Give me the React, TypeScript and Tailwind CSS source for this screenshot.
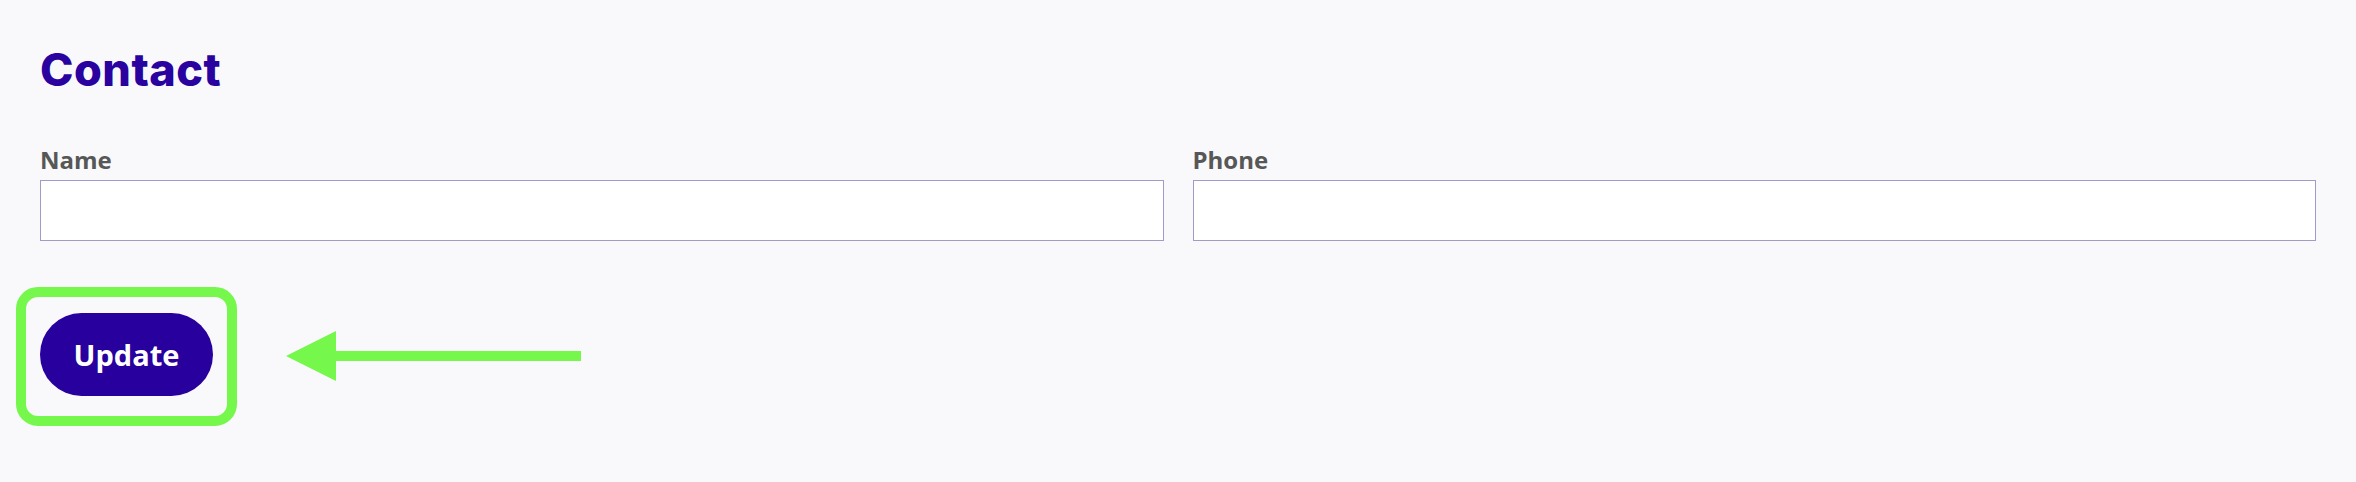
export default function App() {
  return (
    <div className="h-[482px] w-full bg-[#f9f9fb] px-10 pt-[44px]">
      <h1 className="font-['Inter',sans-serif] text-[45px] font-extrabold leading-[52px] tracking-[0.5px] text-[#2a029f]">
        Contact
      </h1>

      <div className="mt-[47px] grid grid-cols-2 gap-[29px]">
        <Field label="Name" />
        <Field label="Phone" />
      </div>

      <div className="mt-[46px] flex items-center">
        <div className="-ml-6 rounded-[22px] border-[10px] border-[#76f74c] px-[14px] pb-5 pt-4">
          <button className="h-[83px] w-[173px] rounded-full bg-[#27009e] font-['Open_Sans',sans-serif] text-[29px] font-bold text-white">
            Update
          </button>
        </div>
        <svg width="300" height="52" viewBox="0 0 300 52" className="ml-[49px]">
          <polygon points="0,25 50,0 50,50" fill="#76f74c" />
          <rect x="49" y="20" width="246" height="10" fill="#76f74c" />
        </svg>
      </div>
    </div>
  )
}

function Field({ label }: { label: string }) {
  return (
    <label className="flex flex-col">
      <span className="font-['Open_Sans',sans-serif] text-[24px] font-bold leading-[33px] text-[#575757]">
        {label}
      </span>
      <input
        type="text"
        className="mt-[4px] h-[61px] w-full border border-[#a09cca] bg-white outline-none"
      />
    </label>
  )
}
